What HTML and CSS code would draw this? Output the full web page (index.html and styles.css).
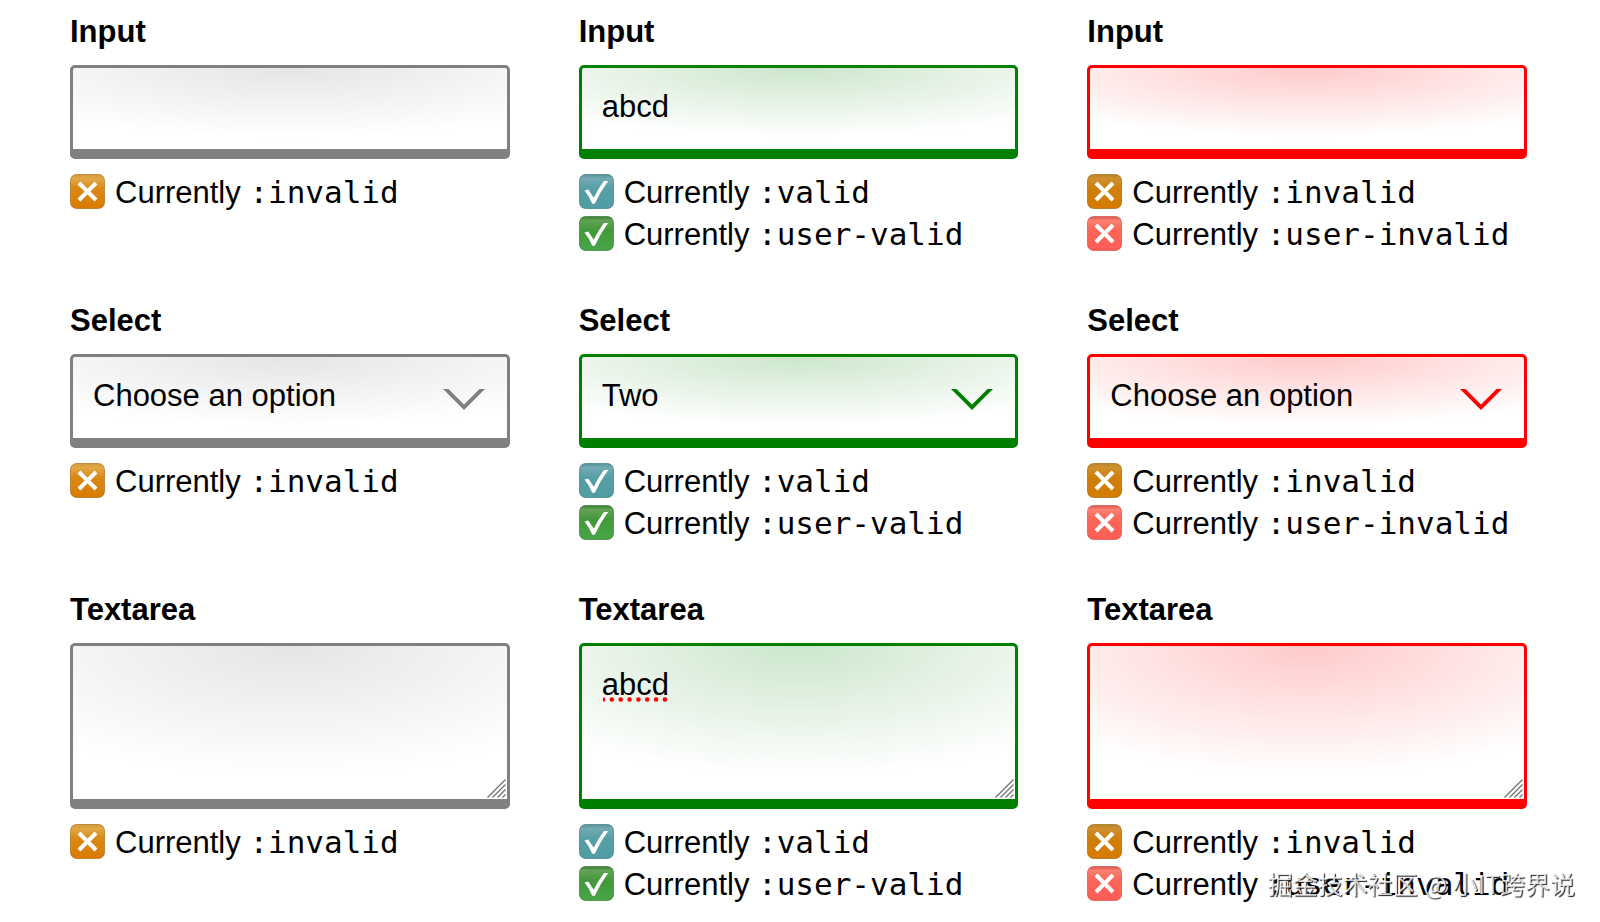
FILE: index.html
```
<!DOCTYPE html>
<html lang="en">
<head>
<meta charset="utf-8">
<meta name="viewport" content="width=device-width, initial-scale=1">
<title>Form validation states</title>
<link rel="stylesheet" href="styles.css">
</head>
<body>
<svg class="defs" width="0" height="0" aria-hidden="true">
  <defs>
    <linearGradient id="g-orange" x1="0" y1="0" x2="0" y2="1"><stop offset="0" stop-color="#cf9a3c"/><stop offset=".12" stop-color="#e2a847"/><stop offset=".4" stop-color="#d98a17"/><stop offset="1" stop-color="#d97a00"/></linearGradient>
    <linearGradient id="g-amber" x1="0" y1="0" x2="0" y2="1"><stop offset="0" stop-color="#b98528"/><stop offset=".12" stop-color="#cf9030"/><stop offset=".4" stop-color="#cd7f0c"/><stop offset="1" stop-color="#d67c00"/></linearGradient>
    <linearGradient id="g-teal" x1="0" y1="0" x2="0" y2="1"><stop offset="0" stop-color="#559399"/><stop offset=".12" stop-color="#74aab2"/><stop offset=".4" stop-color="#579fa7"/><stop offset="1" stop-color="#519ba3"/></linearGradient>
    <linearGradient id="g-green" x1="0" y1="0" x2="0" y2="1"><stop offset="0" stop-color="#3b7f35"/><stop offset=".12" stop-color="#62a356"/><stop offset=".4" stop-color="#43983b"/><stop offset="1" stop-color="#49a549"/></linearGradient>
    <linearGradient id="g-red" x1="0" y1="0" x2="0" y2="1"><stop offset="0" stop-color="#d8564c"/><stop offset=".12" stop-color="#fa8072"/><stop offset=".4" stop-color="#fb6658"/><stop offset="1" stop-color="#ff5d55"/></linearGradient>
    <symbol id="cross" viewBox="0 0 35 35"><path d="M9 9l17 17M26 9L9 26" fill="none" stroke="#fff" stroke-width="4"/></symbol>
    <symbol id="check" viewBox="0 0 35 35"><path d="M5.500 16.500L9.200 15.500 14.800 23.800Q19.500 14 25 7H29.200Q21 18 15.800 29.800H13.200Q10.500 22.500 5.500 16.500Z" fill="#fff"/></symbol>
    <symbol id="chevron" viewBox="0 0 42 21"><path d="M0 0H5.500L21 15.500 36.500 0H42L21 21Z" fill="currentColor"/></symbol>
    <symbol id="grip" viewBox="0 0 19 19"><path d="M.5 18.500l18-18M5.500 18.500l13-13M10.500 18.500l8-8M15.500 18.500l3-3" fill="none" stroke="#6d6d6d" stroke-width="1.200"/></symbol>
  </defs>
</svg>
<main class="board">
  <section class="field neutral">
    <label for="input-a">Input</label>
    <div class="box"><input class="control" id="input-a" type="text"></div>
    <ul class="status"><li><svg class="badge orange"><rect x=".5" y=".5" width="34" height="34" rx="6"/><use href="#cross"/></svg><span>Currently <code>:invalid</code></span></li></ul>
  </section>
  <section class="field good">
    <label for="input-b">Input</label>
    <div class="box"><input class="control" id="input-b" type="text" value="abcd"></div>
    <ul class="status"><li><svg class="badge teal"><rect x=".5" y=".5" width="34" height="34" rx="6"/><use href="#check"/></svg><span>Currently <code>:valid</code></span></li><li><svg class="badge green"><rect x=".5" y=".5" width="34" height="34" rx="6"/><use href="#check"/></svg><span>Currently <code>:user-valid</code></span></li></ul>
  </section>
  <section class="field bad">
    <label for="input-c">Input</label>
    <div class="box"><input class="control" id="input-c" type="text"></div>
    <ul class="status"><li><svg class="badge amber"><rect x=".5" y=".5" width="34" height="34" rx="6"/><use href="#cross"/></svg><span>Currently <code>:invalid</code></span></li><li><svg class="badge red"><rect x=".5" y=".5" width="34" height="34" rx="6"/><use href="#cross"/></svg><span>Currently <code>:user-invalid</code></span></li></ul>
  </section>

  <section class="field neutral">
    <label for="select-a">Select</label>
    <div class="box"><select class="control" id="select-a"><option>Choose an option</option><option>One</option><option>Two</option></select><svg class="chevron"><use href="#chevron"/></svg></div>
    <ul class="status"><li><svg class="badge orange"><rect x=".5" y=".5" width="34" height="34" rx="6"/><use href="#cross"/></svg><span>Currently <code>:invalid</code></span></li></ul>
  </section>
  <section class="field good">
    <label for="select-b">Select</label>
    <div class="box"><select class="control" id="select-b"><option>Choose an option</option><option>One</option><option selected>Two</option></select><svg class="chevron"><use href="#chevron"/></svg></div>
    <ul class="status"><li><svg class="badge teal"><rect x=".5" y=".5" width="34" height="34" rx="6"/><use href="#check"/></svg><span>Currently <code>:valid</code></span></li><li><svg class="badge green"><rect x=".5" y=".5" width="34" height="34" rx="6"/><use href="#check"/></svg><span>Currently <code>:user-valid</code></span></li></ul>
  </section>
  <section class="field bad">
    <label for="select-c">Select</label>
    <div class="box"><select class="control" id="select-c"><option>Choose an option</option><option>One</option><option>Two</option></select><svg class="chevron"><use href="#chevron"/></svg></div>
    <ul class="status"><li><svg class="badge amber"><rect x=".5" y=".5" width="34" height="34" rx="6"/><use href="#cross"/></svg><span>Currently <code>:invalid</code></span></li><li><svg class="badge red"><rect x=".5" y=".5" width="34" height="34" rx="6"/><use href="#cross"/></svg><span>Currently <code>:user-invalid</code></span></li></ul>
  </section>

  <section class="field neutral">
    <label for="text-a">Textarea</label>
    <div class="box"><textarea class="control" id="text-a" rows="3"></textarea><svg class="grip"><use href="#grip"/></svg></div>
    <ul class="status"><li><svg class="badge orange"><rect x=".5" y=".5" width="34" height="34" rx="6"/><use href="#cross"/></svg><span>Currently <code>:invalid</code></span></li></ul>
  </section>
  <section class="field good">
    <label for="text-b">Textarea</label>
    <div class="box"><textarea class="control" id="text-b" rows="3" spellcheck="false">abcd</textarea><svg class="spelling" viewBox="0 0 66 5"><path d="M0 2.500H66" fill="none" stroke="red" stroke-width="4.600" stroke-linecap="round" stroke-dasharray="0 8.850"/></svg><svg class="grip"><use href="#grip"/></svg></div>
    <ul class="status"><li><svg class="badge teal"><rect x=".5" y=".5" width="34" height="34" rx="6"/><use href="#check"/></svg><span>Currently <code>:valid</code></span></li><li><svg class="badge green"><rect x=".5" y=".5" width="34" height="34" rx="6"/><use href="#check"/></svg><span>Currently <code>:user-valid</code></span></li></ul>
  </section>
  <section class="field bad">
    <label for="text-c">Textarea</label>
    <div class="box"><textarea class="control" id="text-c" rows="3"></textarea><svg class="grip"><use href="#grip"/></svg></div>
    <ul class="status"><li><svg class="badge amber"><rect x=".5" y=".5" width="34" height="34" rx="6"/><use href="#cross"/></svg><span>Currently <code>:invalid</code></span></li><li><svg class="badge red"><rect x=".5" y=".5" width="34" height="34" rx="6"/><use href="#cross"/></svg><span>Currently <code>:user-invalid</code></span></li></ul>
  </section>
</main>
<div class="watermark" lang="zh-CN">掘金技术社区 @ 小IT跨界说</div>
</body>
</html>
```
FILE: styles.css
```
* {
  box-sizing: border-box;
}

body {
  margin: 0;
  background: #fff;
  color: #000;
  font-family: "Liberation Sans", Arial, sans-serif;
  font-size: 31px;
  line-height: 36px;
}

.defs {
  position: absolute;
}

.board {
  display: grid;
  grid-template-columns: repeat(3, minmax(0, 1fr));
  gap: 48px 69px;
  padding: 14px 73px 0 70px;
}

.neutral {
  --line: #808080;
  --glow: #e5e5e5;
}

.good {
  --line: #008000;
  --glow: #cce6cc;
}

.bad {
  --line: #ff0000;
  --glow: #ffcaca;
}

.field {
  display: flex;
  flex-direction: column;
  align-items: stretch;
}

.field label {
  align-self: flex-start;
  margin-bottom: 15px;
  font-weight: bold;
}

.box {
  position: relative;
  display: flex;
  margin-bottom: 12px;
  color: var(--line);
}

.control {
  display: block;
  flex: 1;
  min-width: 0;
  margin: 0;
  padding: 21px 20px 24px;
  border: 3px solid var(--line);
  border-bottom-width: 10px;
  border-radius: 5px;
  outline: 0;
  appearance: none;
  background: radial-gradient(80% 85% at 50% 0, var(--glow), #fff) padding-box;
  color: #000;
  font: inherit;
}

input.control,
select.control {
  height: 94px;
}

textarea.control {
  height: 166px;
  resize: none;
}

.chevron {
  position: absolute;
  top: 35px;
  right: 25px;
  width: 42px;
  height: 21px;
  pointer-events: none;
}

.grip {
  position: absolute;
  right: 4px;
  bottom: 11px;
  width: 19px;
  height: 19px;
  pointer-events: none;
}

.spelling {
  position: absolute;
  top: 54px;
  left: 24px;
  width: 66px;
  height: 5px;
  pointer-events: none;
}

.status {
  margin: 0;
  padding: 0;
  list-style: none;
  line-height: 42px;
}

.status li {
  display: flex;
  align-items: center;
  gap: 10px;
  height: 42px;
  white-space: nowrap;
}

.status code {
  font-family: "DejaVu Sans Mono", monospace;
  font-size: 31px;
}

.badge {
  flex: none;
  width: 35px;
  height: 35px;
  margin-bottom: 2px;
}

.badge rect {
  stroke-opacity: 0.6;
}

.orange rect {
  fill: url(#g-orange);
  stroke: #a86000;
}

.amber rect {
  fill: url(#g-amber);
  stroke: #955d00;
}

.teal rect {
  fill: url(#g-teal);
  stroke: #2f7078;
}

.green rect {
  fill: url(#g-green);
  stroke: #267022;
}

.red rect {
  fill: url(#g-red);
  stroke: #cf4038;
}

.watermark {
  position: fixed;
  right: 25px;
  bottom: 21px;
  color: rgba(255, 255, 255, 0.8);
  font-family: "Noto Sans CJK SC", sans-serif;
  font-size: 25px;
  line-height: 36px;
  text-shadow: 1px 1px 1px #222;
  pointer-events: none;
}
```
